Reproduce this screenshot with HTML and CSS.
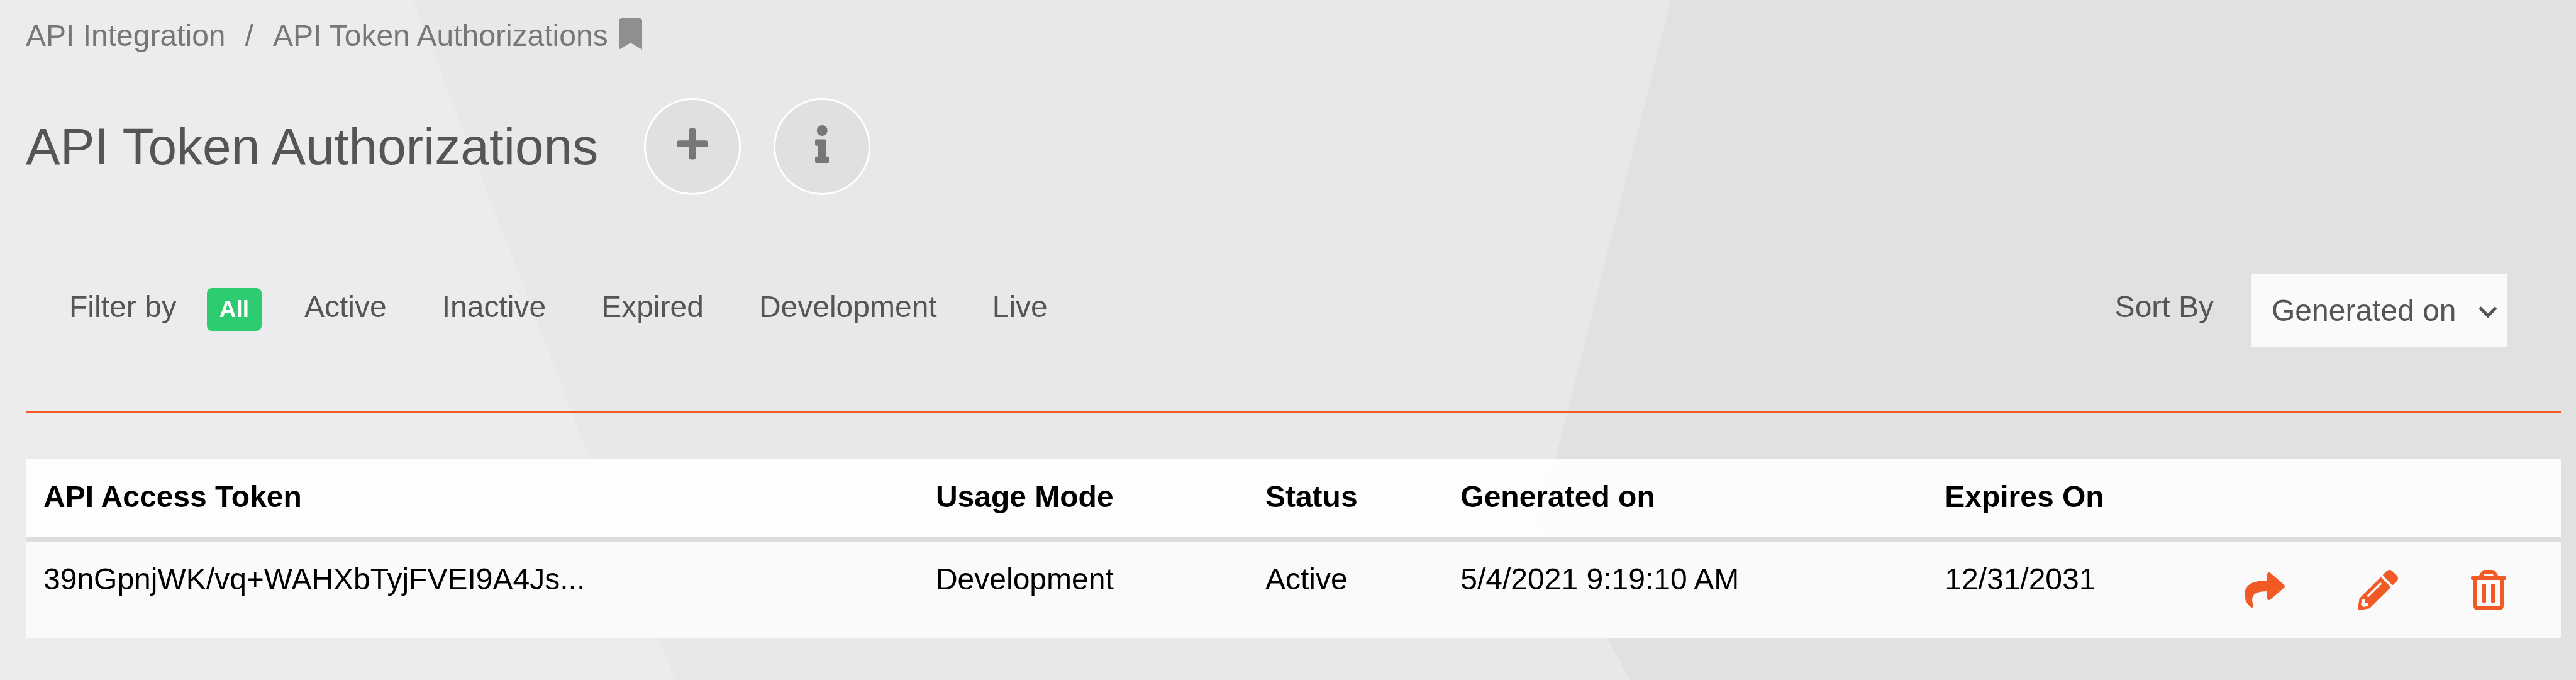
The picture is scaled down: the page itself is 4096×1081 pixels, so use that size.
FILE: index.html
```
<!DOCTYPE html>
<html lang="en">
<head>
    <meta charset="UTF-8">
    <title>API Token Authorizations</title>
    <link rel="stylesheet" href="styles.css">
</head>
<body>
<svg class="backdrop" viewBox="0 0 4096 1081" preserveAspectRatio="none" aria-hidden="true">
    <path fill="#ececee" d="M0 0H4096V1081H0z"/>
    <path fill="#e8e8e8" d="M657 0H4096V1081H1073z"/>
    <path fill="#e1e1e1" d="M2657 0H4096V1081H2592L2450 823z"/>
    <path fill="none" stroke="#e5e5e5" stroke-width="2" d="M2450 823L2381 1081"/>
</svg>
<div class="page">
    <nav class="breadcrumb" aria-label="Breadcrumb">
        <a href="#">API Integration</a>
        <span class="slash">/</span>
        <a href="#">API Token Authorizations</a>
        <button class="bookmark" type="button" aria-label="Bookmark">
            <svg viewBox="0 0 384 512"><path d="M0 512V48C0 21.49 21.49 0 48 0h288c26.51 0 48 21.49 48 48v464L192 400 0 512z"/></svg>
        </button>
    </nav>

    <header class="title">
        <h1>API Token Authorizations</h1>
        <button class="round" type="button" aria-label="Add">
            <svg class="plus" viewBox="0 0 448 512"><path d="M416 208H272V64c0-17.67-14.33-32-32-32h-32c-17.67 0-32 14.33-32 32v144H32c-17.67 0-32 14.33-32 32v32c0 17.67 14.33 32 32 32h144v144c0 17.67 14.33 32 32 32h32c17.67 0 32-14.33 32-32V304h144c17.67 0 32-14.33 32-32v-32c0-17.67-14.33-32-32-32z"/></svg>
        </button>
        <button class="round" type="button" aria-label="Information">
            <svg class="info" viewBox="0 0 192 512"><path d="M20 424.229h20V279.771H20c-11.046 0-20-8.954-20-20V212c0-11.046 8.954-20 20-20h112c11.046 0 20 8.954 20 20v212.229h20c11.046 0 20 8.954 20 20V492c0 11.046-8.954 20-20 20H20c-11.046 0-20-8.954-20-20v-47.771c0-11.046 8.954-20 20-20zM96 0C56.235 0 24 32.235 24 72s32.235 72 72 72 72-32.235 72-72S135.764 0 96 0z"/></svg>
        </button>
    </header>

    <div class="toolbar">
        <div class="filter">
            <span>Filter by</span>
            <ul>
                <li><a class="active" href="#">All</a></li>
                <li><a href="#">Active</a></li>
                <li><a href="#">Inactive</a></li>
                <li><a href="#">Expired</a></li>
                <li><a href="#">Development</a></li>
                <li><a href="#">Live</a></li>
            </ul>
        </div>
        <div class="sort">
            <label for="sort">Sort By</label>
            <div class="select">
                <select id="sort">
                    <option>Generated on</option>
                    <option>Expires On</option>
                </select>
                <svg viewBox="0 0 32 20" aria-hidden="true"><path d="M3 3L16 16L29 3"/></svg>
            </div>
        </div>
    </div>

    <table class="tokens">
        <thead>
        <tr>
            <th class="col-token">API Access Token</th>
            <th class="col-mode">Usage Mode</th>
            <th class="col-status">Status</th>
            <th class="col-generated">Generated on</th>
            <th class="col-expires">Expires On</th>
            <th class="col-actions"></th>
        </tr>
        </thead>
        <tbody>
        <tr>
            <td>39nGpnjWK/vq+WAHXbTyjFVEI9A4Js...</td>
            <td>Development</td>
            <td>Active</td>
            <td>5/4/2021 9:19:10 AM</td>
            <td>12/31/2031</td>
            <td class="actions">
                <div>
                    <button type="button" aria-label="Share">
                        <svg viewBox="0 0 512 512"><path d="M503.691 189.836L327.687 37.851C312.281 24.546 288 35.347 288 56.015v80.053C127.371 137.907 0 170.1 0 322.326c0 61.441 39.581 122.309 83.333 154.132 13.653 9.931 33.111-2.533 28.077-18.631C66.066 312.814 132.917 274.316 288 272.085V360c0 20.7 24.3 31.453 39.687 18.164l176.004-152c11.071-9.562 11.086-26.753 0-36.328z"/></svg>
                    </button>
                    <button type="button" aria-label="Edit">
                        <svg viewBox="0 0 512 512"><path d="M497.9 142.1l-46.1 46.1c-4.7 4.7-12.3 4.7-17 0l-111-111c-4.7-4.7-4.7-12.3 0-17l46.1-46.1c18.7-18.7 49.1-18.7 67.9 0l60.1 60.1c18.8 18.7 18.8 49.1 0 67.9zM284.2 99.8L21.6 362.4.4 483.9c-2.9 16.4 11.4 30.6 27.8 27.8l121.5-21.3 262.6-262.6c4.7-4.7 4.7-12.3 0-17l-111-111c-4.8-4.7-12.4-4.7-17.1 0zM124.1 339.9c-5.5-5.5-5.5-14.3 0-19.8l154-154c5.5-5.5 14.3-5.5 19.8 0s5.5 14.3 0 19.8l-154 154c-5.5 5.5-14.3 5.5-19.8 0zM88 424h48v36.3l-64.5 11.3-31.1-31.1L51.7 376H88v48z"/></svg>
                    </button>
                    <button type="button" aria-label="Delete">
                        <svg viewBox="0 0 448 512"><path d="M268 416h24a12 12 0 0 0 12-12V188a12 12 0 0 0-12-12h-24a12 12 0 0 0-12 12v216a12 12 0 0 0 12 12zM432 80h-82.41l-34-56.7A48 48 0 0 0 274.41 0H173.59a48 48 0 0 0-41.16 23.3L98.41 80H16A16 16 0 0 0 0 96v16a16 16 0 0 0 16 16h16v336a48 48 0 0 0 48 48h288a48 48 0 0 0 48-48V128h16a16 16 0 0 0 16-16V96a16 16 0 0 0-16-16zM171.84 50.91A6 6 0 0 1 177 48h94a6 6 0 0 1 5.15 2.91L293.61 80H154.39zM368 464H80V128h288zm-212-48h24a12 12 0 0 0 12-12V188a12 12 0 0 0-12-12h-24a12 12 0 0 0-12 12v216a12 12 0 0 0 12 12z"/></svg>
                    </button>
                </div>
            </td>
        </tr>
        </tbody>
    </table>
</div>
</body>
</html>
```

FILE: styles.css
```
* {
    margin: 0;
    padding: 0;
    box-sizing: border-box;
}

body {
    font-family: "Liberation Sans", Arial, sans-serif;
    font-size: 48px;
    line-height: 72px;
    color: #555;
    background: #ececee;
}

a {
    color: inherit;
    text-decoration: none;
}

button {
    color: inherit;
    border: none;
    background: none;
    cursor: pointer;
}

svg {
    display: block;
    fill: currentColor;
}

/* angled grey panels behind the page */
.backdrop {
    position: fixed;
    top: 0;
    left: 0;
    width: 100%;
    height: 100%;
    z-index: -1;
}

.page {
    padding: 21px 24px 0 41px;
}

.breadcrumb {
    display: flex;
    color: #777;
}

.slash {
    margin: 0 31px;
}

.bookmark {
    margin-left: 17px;
    padding-bottom: 6px;
    color: #8f8f8f;
}

.bookmark svg {
    height: 50px;
}

.title {
    display: flex;
    align-items: center;
    margin-top: 63px;
}

h1 {
    margin-right: 73px;
    font-size: 82px;
    font-weight: normal;
}

.round {
    display: flex;
    align-items: center;
    justify-content: center;
    width: 154px;
    height: 154px;
    margin-right: 52px;
    padding-bottom: 9px;
    color: #777;
    background: #e0e0e0;
    border: 3px solid #fff;
    border-radius: 50%;
}

.plus {
    height: 57px;
}

.info {
    height: 60px;
}

.toolbar {
    display: flex;
    justify-content: space-between;
    margin-top: 126px;
    padding: 0 86px 102px 69px;
    border-bottom: 3px solid #f15a24;
}

.filter {
    display: flex;
    align-items: baseline;
    padding-top: 16px;
}

.filter ul {
    display: flex;
    align-items: baseline;
    gap: 88px;
    margin-left: 48px;
    list-style: none;
}

.filter .active {
    display: block;
    margin-right: -20px;
    padding: 0 20px;
    font-size: 37px;
    line-height: 68px;
    font-weight: bold;
    color: #fff;
    background: #2ecc71;
    border-radius: 8px;
}

.sort {
    display: flex;
    align-items: flex-start;
    gap: 60px;
}

.sort label {
    padding-top: 16px;
}

.select {
    position: relative;
}

.select select {
    display: block;
    width: 406px;
    height: 115px;
    padding: 0 32px;
    appearance: none;
    font: inherit;
    color: #555;
    background: #fafafa;
    border: none;
    border-radius: 0;
}

.select svg {
    position: absolute;
    top: 50%;
    right: 14px;
    width: 32px;
    height: 20px;
    margin-top: -8px;
    fill: none;
    stroke: #555;
    stroke-width: 5px;
    pointer-events: none;
}

.tokens {
    width: 100%;
    margin-top: 74px;
    table-layout: fixed;
    border-collapse: separate;
    border-spacing: 0;
    color: #000;
    text-align: left;
}

.tokens th {
    height: 131px;
    padding: 24px 28px 0;
    vertical-align: top;
    background: rgba(255, 255, 255, .9);
    background-clip: padding-box;
    border-bottom: 8px solid #ddd;
}

.tokens td {
    height: 154px;
    padding: 24px 28px 0;
    vertical-align: top;
    background: #fafafa;
}

.tokens .col-token {
    width: 35.2%;
}

.tokens .col-mode {
    width: 13%;
}

.tokens .col-status {
    width: 7.7%;
}

.tokens .col-generated {
    width: 19.1%;
}

.tokens .col-expires {
    width: 11%;
}

.tokens .actions {
    padding: 0 87px 0 0;
    vertical-align: middle;
    color: #f15a24;
}

.actions div {
    display: flex;
    justify-content: flex-end;
    gap: 116px;
}

.actions svg {
    height: 64px;
}
```
